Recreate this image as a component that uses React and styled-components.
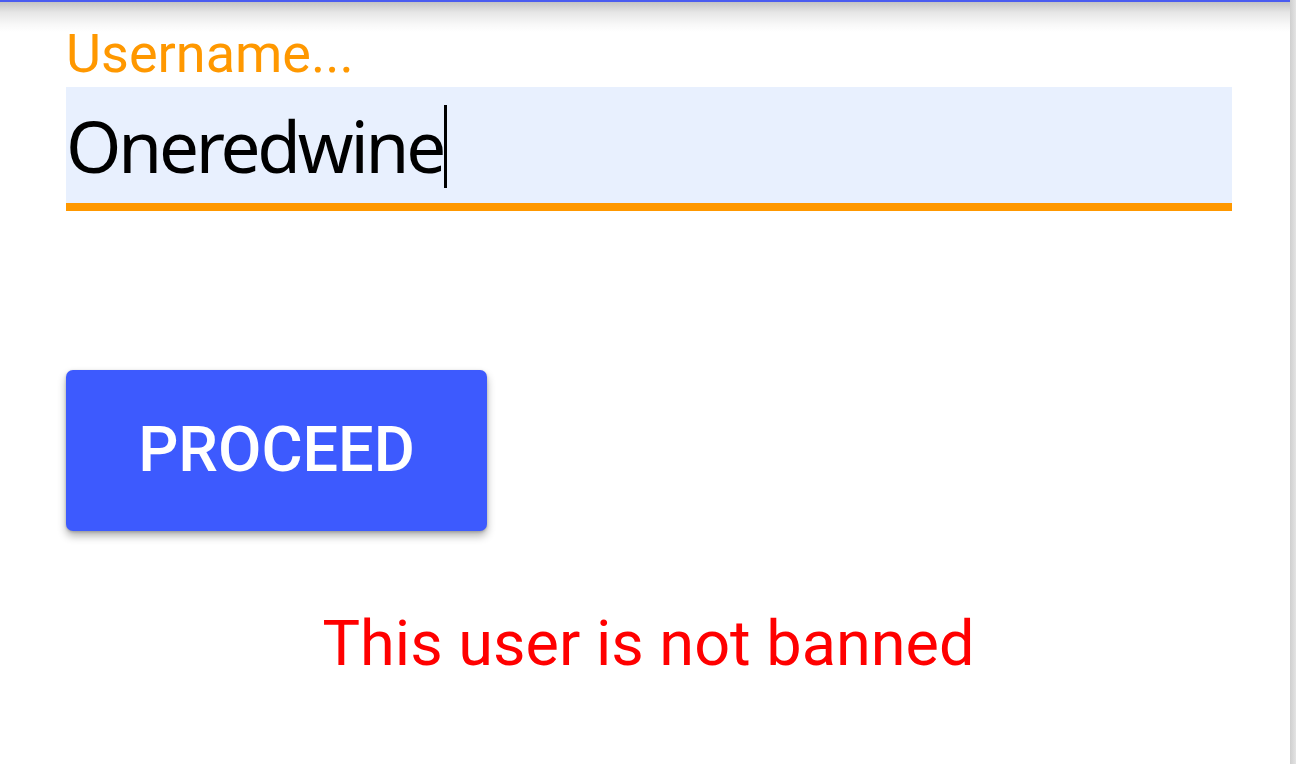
import React from "react";
import styled, { createGlobalStyle } from "styled-components";

const GlobalStyle = createGlobalStyle`
  html, body {
    margin: 0;
    padding: 0;
    background: #ffffff;
  }
  body {
    font-family: Roboto, "Liberation Sans", sans-serif;
  }
`;

const Screen = styled.div`
  width: 1296px;
  height: 764px;
  display: flex;
  overflow: hidden;
  background: #ffffff;
`;

const Main = styled.div`
  flex: 1;
  display: flex;
  flex-direction: column;
`;

const ScrollEdge = styled.div`
  width: 6px;
  background: linear-gradient(to right, #cfcfcf, #e4e4e4);
`;

const TopShade = styled.div`
  height: 30px;
  border-top: 2px solid #4a5cf0;
  background: linear-gradient(to bottom, #c4c4c4 0%, #e6e6e6 35%, #f8f8f8 75%, #ffffff 100%);
`;

const Form = styled.div`
  display: flex;
  flex-direction: column;
  padding: 0 58px 0 66px;
`;

const Label = styled.label`
  font-size: 54px;
  line-height: 44px;
  margin-bottom: 11px;
  color: #ff9800;
`;

const Field = styled.div`
  height: 116px;
  background: #e8f0fe;
  border-bottom: 8px solid #ff9800;
  display: flex;
  align-items: center;
`;

const Value = styled.span`
  font-family: "Noto Sans", "Open Sans", sans-serif;
  font-size: 71px;
  color: #000000;
  letter-spacing: -3.2px;
`;

const Caret = styled.span`
  display: inline-block;
  width: 3px;
  height: 83px;
  margin-left: 1px;
  background: #000000;
  vertical-align: -15px;
`;

const Button = styled.button`
  margin-top: 159px;
  width: 421px;
  height: 161px;
  border: none;
  border-radius: 7px;
  background: #3d5afe;
  color: #ffffff;
  font-family: Roboto, sans-serif;
  font-weight: 500;
  font-size: 63px;
  padding-bottom: 4px;
  box-shadow: 0 5px 8px rgba(0, 0, 0, 0.3), 0 1px 3px rgba(0, 0, 0, 0.2);
`;

const Status = styled.div`
  margin-top: 76px;
  padding-left: 7px;
  text-align: center;
  font-size: 63px;
  color: #ff0000;
`;

export default function App() {
  return (
    <>
      <GlobalStyle />
      <Screen>
        <Main>
          <TopShade />
          <Form>
            <Label>Username...</Label>
            <Field>
              <Value>
                Oneredwine
                <Caret />
              </Value>
            </Field>
            <Button>PROCEED</Button>
          </Form>
          <Status>This user is not banned</Status>
        </Main>
        <ScrollEdge />
      </Screen>
    </>
  );
}
